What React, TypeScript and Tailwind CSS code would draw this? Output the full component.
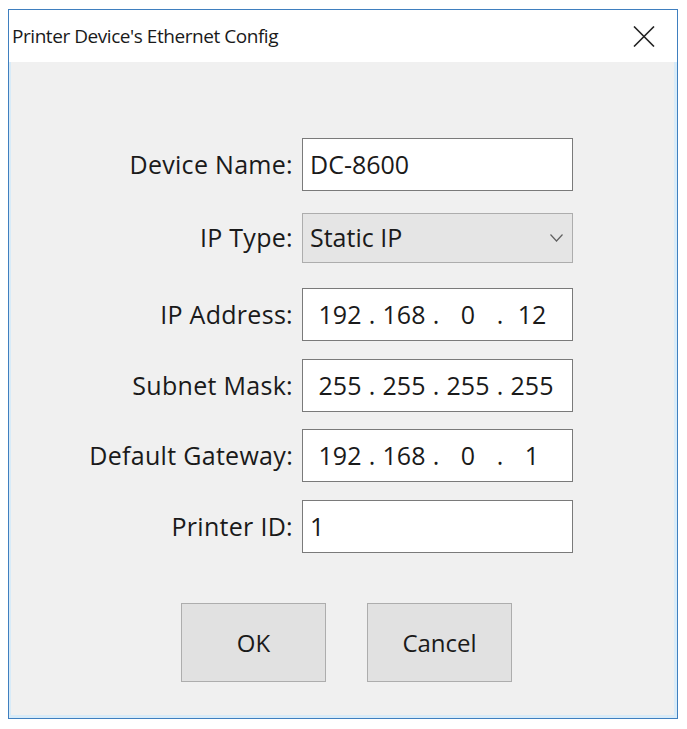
import React from "react";

const font = { fontFamily: "'Open Sans', 'Noto Sans', sans-serif" };

function IpBox({ parts }: { parts: string[] }) {
  return (
    <div className="flex items-center h-[53px] w-[271px] bg-white border border-[#7a7a7a] pl-[9px] text-[25px] text-[#1a1a1a]">
      {parts.map((p, i) => (
        <React.Fragment key={i}>
          <span className="w-[56px] text-center">{p}</span>
          {i < 3 && <span className="w-[8px] text-center">.</span>}
        </React.Fragment>
      ))}
    </div>
  );
}

function Row({ label, mt, children }: { label: string; mt: string; children: React.ReactNode }) {
  return (
    <div className={`flex items-center ${mt}`}>
      <div className="w-[284px] text-right text-[25px] tracking-[0.3px] text-[#1a1a1a]">{label}</div>
      <div className="ml-[9px]">{children}</div>
    </div>
  );
}

export default function App() {
  return (
    <div className="w-[687px] h-[729px] bg-white pt-[9px] pl-[8px]" style={font}>
      <div className="w-[670px] h-[710px] border border-[#3f7fbf] bg-[#f0f0f0] flex flex-col shadow-[inset_2px_0_0_#d8ebf8,inset_-3px_0_0_#d8ebf8,inset_0_-3px_0_#d8ebf8]">
        {/* title bar */}
        <div className="h-[52px] bg-white flex items-center justify-between pl-[3px] pr-[22px]">
          <span className="text-[19px] tracking-[-0.45px] text-[#1a1a1a]">Printer Device's Ethernet Config</span>
          <svg width="22" height="21" viewBox="0 0 22 21">
            <path d="M1 0.5 L21 20.5 M21 0.5 L1 20.5" stroke="#222" strokeWidth="1.6" />
          </svg>
        </div>

        <Row label="Device Name:" mt="mt-[76px]">
          <div className="flex items-center h-[53px] w-[271px] bg-white border border-[#7a7a7a] pl-[7px] text-[25px] text-[#1a1a1a]">
            DC-8600
          </div>
        </Row>
        <Row label="IP Type:" mt="mt-[22px]">
          <div className="flex items-center justify-between h-[50px] w-[271px] bg-[#e5e5e5] border border-[#adadad] pl-[7px] pr-[9px] text-[25px] text-[#1a1a1a]">
            <span>Static IP</span>
            <svg width="13" height="8" viewBox="0 0 13 8">
              <path d="M0.5 0.5 L6.5 7 L12.5 0.5" fill="none" stroke="#606060" strokeWidth="1.2" />
            </svg>
          </div>
        </Row>
        <Row label="IP Address:" mt="mt-[25px]">
          <IpBox parts={["192", "168", "0", "12"]} />
        </Row>
        <Row label="Subnet Mask:" mt="mt-[18px]">
          <IpBox parts={["255", "255", "255", "255"]} />
        </Row>
        <Row label="Default Gateway:" mt="mt-[17px]">
          <IpBox parts={["192", "168", "0", "1"]} />
        </Row>
        <Row label="Printer ID:" mt="mt-[18px]">
          <div className="flex items-center h-[53px] w-[271px] bg-white border border-[#7a7a7a] pl-[7px] text-[25px] text-[#1a1a1a]">
            1
          </div>
        </Row>

        <div className="flex mt-[50px] ml-[172px] gap-[41px]">
          <button className="w-[145px] h-[79px] bg-[#e1e1e1] border border-[#adadad] text-[24px] text-[#1a1a1a]">OK</button>
          <button className="w-[145px] h-[79px] bg-[#e1e1e1] border border-[#adadad] text-[24px] text-[#1a1a1a]">Cancel</button>
        </div>
      </div>
    </div>
  );
}
